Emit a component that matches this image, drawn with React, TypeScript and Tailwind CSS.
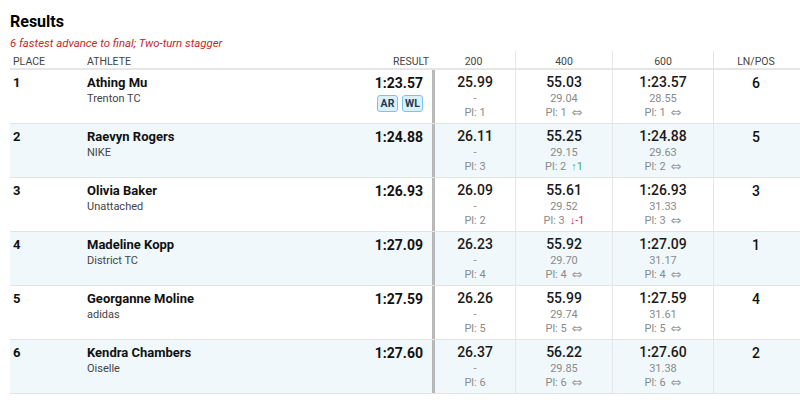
import React from "react";

type Split = { main: string; sub: string; pl: string; delta?: "same" | "up" | "down"; dtext?: string };
type Row = {
  place: string; name: string; team: string; result: string; badges?: string[];
  s200: Split; s400: Split; s600: Split; ln: string;
};

const rows: Row[] = [
  { place: "1", name: "Athing Mu", team: "Trenton TC", result: "1:23.57", badges: ["AR", "WL"],
    s200: { main: "25.99", sub: "-", pl: "1" }, s400: { main: "55.03", sub: "29.04", pl: "1", delta: "same" },
    s600: { main: "1:23.57", sub: "28.55", pl: "1", delta: "same" }, ln: "6" },
  { place: "2", name: "Raevyn Rogers", team: "NIKE", result: "1:24.88",
    s200: { main: "26.11", sub: "-", pl: "3" }, s400: { main: "55.25", sub: "29.15", pl: "2", delta: "up", dtext: "1" },
    s600: { main: "1:24.88", sub: "29.63", pl: "2", delta: "same" }, ln: "5" },
  { place: "3", name: "Olivia Baker", team: "Unattached", result: "1:26.93",
    s200: { main: "26.09", sub: "-", pl: "2" }, s400: { main: "55.61", sub: "29.52", pl: "3", delta: "down", dtext: "-1" },
    s600: { main: "1:26.93", sub: "31.33", pl: "3", delta: "same" }, ln: "3" },
  { place: "4", name: "Madeline Kopp", team: "District TC", result: "1:27.09",
    s200: { main: "26.23", sub: "-", pl: "4" }, s400: { main: "55.92", sub: "29.70", pl: "4", delta: "same" },
    s600: { main: "1:27.09", sub: "31.17", pl: "4", delta: "same" }, ln: "1" },
  { place: "5", name: "Georganne Moline", team: "adidas", result: "1:27.59",
    s200: { main: "26.26", sub: "-", pl: "5" }, s400: { main: "55.99", sub: "29.74", pl: "5", delta: "same" },
    s600: { main: "1:27.59", sub: "31.61", pl: "5", delta: "same" }, ln: "4" },
  { place: "6", name: "Kendra Chambers", team: "Oiselle", result: "1:27.60",
    s200: { main: "26.37", sub: "-", pl: "6" }, s400: { main: "56.22", sub: "29.85", pl: "6", delta: "same" },
    s600: { main: "1:27.60", sub: "31.38", pl: "6", delta: "same" }, ln: "2" },
];

function SplitCell({ s, w, border }: { s: Split; w: string; border: string }) {
  return (
    <div className={`${w} ${border} flex flex-col items-center pt-[3px]`}>
      <div className="text-[14px] leading-[18px] font-medium text-[#1a1a1a]">{s.main}</div>
      <div className="text-[11px] leading-[15px] text-[#8a8a8a]">{s.sub}</div>
      <div className="text-[11px] leading-[13px] text-[#8a8a8a] flex items-center">
        <span>Pl: {s.pl}</span>
        {s.delta === "same" && (
          <span className="ml-[5px] text-[13px] leading-[13px] text-[#999]" style={{ fontFamily: "'DejaVu Sans', sans-serif" }}>⇔</span>
        )}
        {s.delta === "up" && <span className="ml-[5px] text-[#4caf50]">↑{s.dtext}</span>}
        {s.delta === "down" && <span className="ml-[5px] text-[#e0284f]">↓{s.dtext}</span>}
      </div>
    </div>
  );
}

export default function App() {
  return (
    <div className="w-[800px] h-[402px] bg-white text-[#111] overflow-hidden" style={{ fontFamily: "Roboto, 'Liberation Sans', sans-serif" }}>
      <div className="pl-[10px] pt-[12px]">
        <div className="text-[16px] leading-[20px] font-bold text-black">Results</div>
        <div className="text-[11.4px] leading-[14px] italic text-[#c62828] mt-[4px]">6 fastest advance to final; Two-turn stagger</div>
      </div>
      <div className="pl-[10px]">
        <div className="flex h-[19px] border-b-2 border-[#e6e6e6] text-[10.5px] leading-[12px] text-[#444] uppercase items-stretch mt-[1px]">
          <div className="w-[77px] pl-[3px] flex items-end">Place</div>
          <div className="w-[345px] flex items-end justify-between pr-[3px]">
            <span>Athlete</span>
            <span>Result</span>
          </div>
          <div className="w-[83px] flex items-end justify-center">200</div>
          <div className="w-[97px] border-l border-[#e6e6e6] flex items-end justify-center">400</div>
          <div className="w-[101px] border-l border-[#e6e6e6] flex items-end justify-center">600</div>
          <div className="flex-1 border-l border-[#e6e6e6] flex items-end justify-center pr-[2px]">LN/POS</div>
        </div>
        {rows.map((r, i) => (
          <div key={r.place} className={`flex h-[54px] border-b border-[#e3e3e3] ${i % 2 === 1 ? "bg-[#f0f8fc]" : "bg-white"}`}>
            <div className="w-[77px] pl-[3px] pt-[4px] text-[13px] leading-[18px] font-bold">{r.place}</div>
            <div className="w-[345px] flex justify-between pr-[9px] pt-[4px]">
              <div>
                <div className="text-[13px] leading-[18px] font-bold">{r.name}</div>
                <div className="text-[11px] leading-[14px] text-[#444]">{r.team}</div>
              </div>
              <div className="flex flex-col items-end">
                <div className="text-[14px] leading-[18px] font-bold">{r.result}</div>
                {r.badges && (
                  <div className="flex gap-[4px] mt-[3px]">
                    {r.badges.map((b) => (
                      <span key={b} className="h-[17px] w-[21px] flex items-center justify-center rounded-[3px] border border-[#7cc4ec] bg-[#dcf0fb] text-[10.5px] font-bold text-[#1d3a50]">{b}</span>
                    ))}
                  </div>
                )}
              </div>
            </div>
            <SplitCell s={r.s200} w="w-[83px]" border="border-l-[3px] border-[#b8b8b8]" />
            <SplitCell s={r.s400} w="w-[97px]" border="border-l border-[#e6e6e6]" />
            <SplitCell s={r.s600} w="w-[101px]" border="border-l border-[#e6e6e6]" />
            <div className="flex-1 border-l border-[#e6e6e6] flex justify-center pt-[4px] pr-[2px] text-[14px] leading-[18px] font-medium">{r.ln}</div>
          </div>
        ))}
      </div>
    </div>
  );
}
